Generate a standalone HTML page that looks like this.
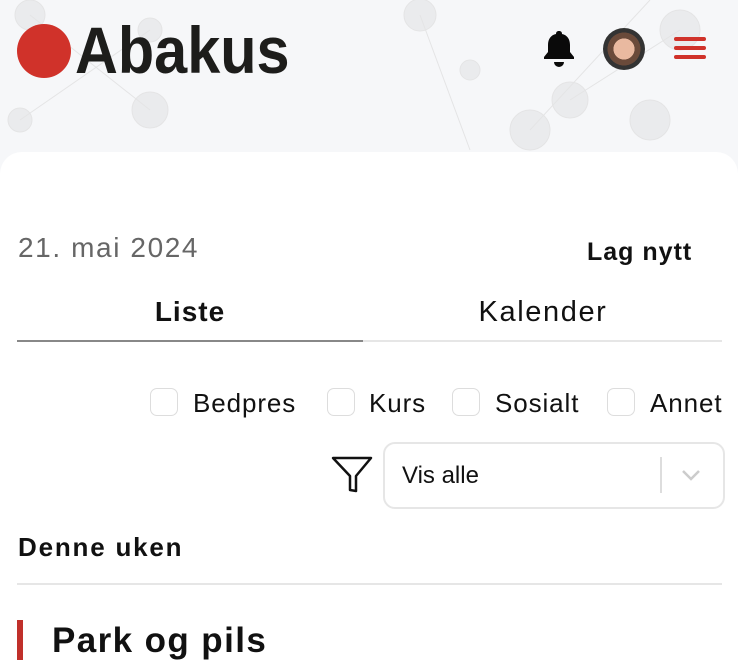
<!DOCTYPE html>
<html><head><meta charset="utf-8"><style>
body{margin:0;width:738px;height:658px;overflow:hidden;background:#f6f7f9;font-family:"Liberation Sans",sans-serif;position:relative;color:#111}
.a{position:absolute}
.cb{position:absolute;width:28px;height:28px;border:1.5px solid #ddd;border-radius:7px;box-sizing:border-box;background:#fff}
.t{position:absolute;font-size:26px;line-height:30px;letter-spacing:.9px}
</style></head><body>
<svg class="a" style="left:0;top:0" width="738" height="160">
<g stroke="#ddd" stroke-width="1" fill="#e6e7e9" opacity=".7">
<circle cx="30" cy="15" r="15"/><circle cx="150" cy="30" r="12"/><circle cx="20" cy="120" r="12"/><circle cx="150" cy="110" r="18"/><circle cx="420" cy="15" r="16"/><circle cx="570" cy="100" r="18"/><circle cx="680" cy="30" r="20"/><circle cx="650" cy="120" r="20"/><circle cx="530" cy="130" r="20"/><circle cx="470" cy="70" r="10"/>
<line x1="30" y1="15" x2="150" y2="110"/><line x1="150" y1="30" x2="20" y2="120"/><line x1="570" y1="100" x2="680" y2="30"/><line x1="530" y1="130" x2="650" y2="0"/><line x1="420" y1="15" x2="470" y2="150"/>
</g></svg>
<div class="a" style="left:17px;top:24px;width:54px;height:54px;border-radius:50%;background:#d0322a"></div>
<div class="a" style="left:75px;top:14px;font-size:66px;font-weight:bold;line-height:72px;color:#1d1d1b;transform:scaleX(.9);transform-origin:left">Abakus</div>
<svg class="a" style="left:541px;top:29px" width="36" height="38" viewBox="0 0 36 38"><path d="M18 2c-2 0-3 1-3 3-5 1-8 5-8 11v7l-4 5v2h30v-2l-4-5v-7c0-6-3-10-8-11 0-2-1-3-3-3z M13 33a5 5 0 0 0 10 0z" fill="#0a0a0a"/></svg>
<div class="a" style="left:603px;top:28px;width:42px;height:42px;border-radius:50%;background:radial-gradient(circle at 50% 50%,#e9b9a0 0 35%,#6a4a3a 36% 55%,#333 56%)"></div>
<div class="a" style="left:674px;top:37px;width:32px;height:4px;background:#d0322a;border-radius:2px"></div>
<div class="a" style="left:674px;top:46px;width:32px;height:4px;background:#d0322a;border-radius:2px"></div>
<div class="a" style="left:674px;top:55px;width:32px;height:4px;background:#d0322a;border-radius:2px"></div>
<div class="a" style="left:0;top:152px;width:738px;height:520px;background:#fff;border-radius:22px 22px 0 0"></div>
<div class="a" style="left:18px;top:232px;font-size:28px;color:#666;letter-spacing:1.6px">21. mai 2024</div>
<div class="a" style="left:587px;top:238px;font-size:25px;font-weight:bold;letter-spacing:1px">Lag nytt</div>
<div class="a" style="left:17px;top:296px;width:346px;text-align:center;font-size:28px;font-weight:bold;letter-spacing:1px">Liste</div>
<div class="a" style="left:363px;top:296px;width:360px;text-align:center;font-size:29px;letter-spacing:1.6px">Kalender</div>
<div class="a" style="left:17px;top:340px;width:705px;height:2px;background:#e6e6e6"></div>
<div class="a" style="left:17px;top:340px;width:346px;height:2px;background:#888"></div>
<div class="cb" style="left:150px;top:388px"></div><div class="t" style="left:193px;top:388px">Bedpres</div>
<div class="cb" style="left:327px;top:388px"></div><div class="t" style="left:369px;top:388px">Kurs</div>
<div class="cb" style="left:452px;top:388px"></div><div class="t" style="left:495px;top:388px">Sosialt</div>
<div class="cb" style="left:607px;top:388px"></div><div class="t" style="left:650px;top:388px">Annet</div>
<svg class="a" style="left:331px;top:456px" width="42" height="38" viewBox="0 0 42 38"><path d="M2 2h38L25 20v15l-6-1V20z" fill="none" stroke="#111" stroke-width="2.5" stroke-linejoin="round"/></svg>
<div class="a" style="left:383px;top:442px;width:342px;height:67px;border:2px solid #e6e6e6;border-radius:12px;box-sizing:border-box"></div>
<div class="a" style="left:402px;top:462px;font-size:24px">Vis alle</div>
<div class="a" style="left:660px;top:457px;width:1.5px;height:36px;background:#ddd"></div>
<svg class="a" style="left:680px;top:468px" width="22" height="14"><path d="M3 3l8 8 8-8" fill="none" stroke="#ccc" stroke-width="2.5"/></svg>
<div class="a" style="left:18px;top:532px;font-size:26px;font-weight:bold;letter-spacing:1.8px">Denne uken</div>
<div class="a" style="left:17px;top:583px;width:705px;height:2px;background:#e6e6e6"></div>
<div class="a" style="left:17px;top:620px;width:6px;height:40px;background:#c0302a"></div>
<div class="a" style="left:52px;top:621px;font-size:35px;font-weight:bold;letter-spacing:1.4px">Park og pils</div>
</body></html>
